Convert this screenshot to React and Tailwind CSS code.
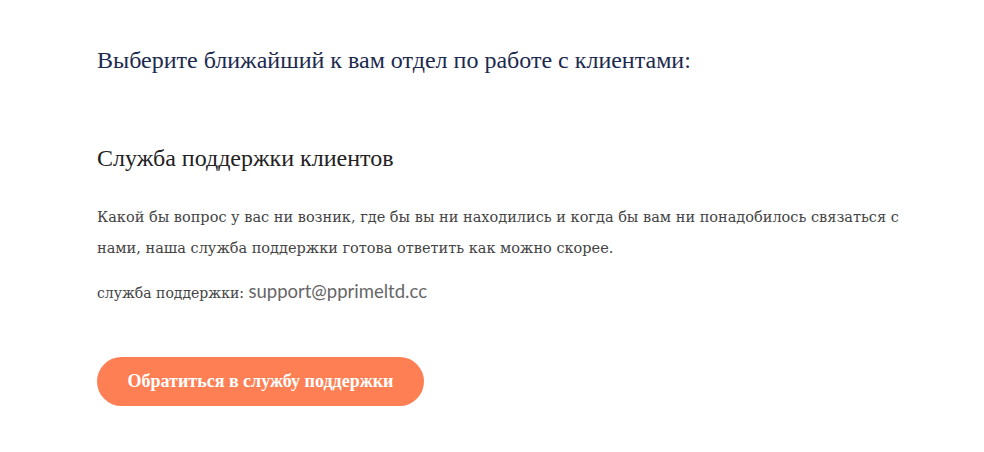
import React from 'react';

const serif = { fontFamily: '"Liberation Serif", "Times New Roman", serif' };
const bodySerif = { fontFamily: '"DejaVu Serif", Georgia, serif' };

export default function App() {
    return (
        <div className="min-h-screen bg-white" style={serif}>
            <div className="pl-[97px] pr-10 pt-[44px]">
                <h2 className="text-[24px] leading-[32px] text-[#1b2a4e]">
                    Выберите ближайший к вам отдел по работе с клиентами:
                </h2>

                <h3 className="mt-[67px] text-[24px] leading-[30px] text-[#222]">
                    Служба поддержки клиентов
                </h3>

                <div style={bodySerif}>
                    <p className="mt-[29px] text-[14.5px] leading-[31px] text-[#444] max-w-[840px]">
                        Какой бы вопрос у вас ни возник, где бы вы ни находились и когда бы вам ни понадобилось связаться с
                        нами, наша служба поддержки готова ответить как можно скорее.
                    </p>

                    <p className="mt-[15px] text-[14px] leading-[24px] text-[#444]">
                        служба поддержки:{' '}
                        <a href="#" className="text-[18.5px] text-[#666]" style={{ fontFamily: 'Lato, "Open Sans", sans-serif' }}>
                            support@pprimeltd.cc
                        </a>
                    </p>
                </div>

                <button className="mt-[52px] h-[49px] w-[327px] rounded-full bg-[#ff7f55] text-white text-[18px] font-bold">
                    Обратиться в службу поддержки
                </button>
            </div>
        </div>
    );
}
